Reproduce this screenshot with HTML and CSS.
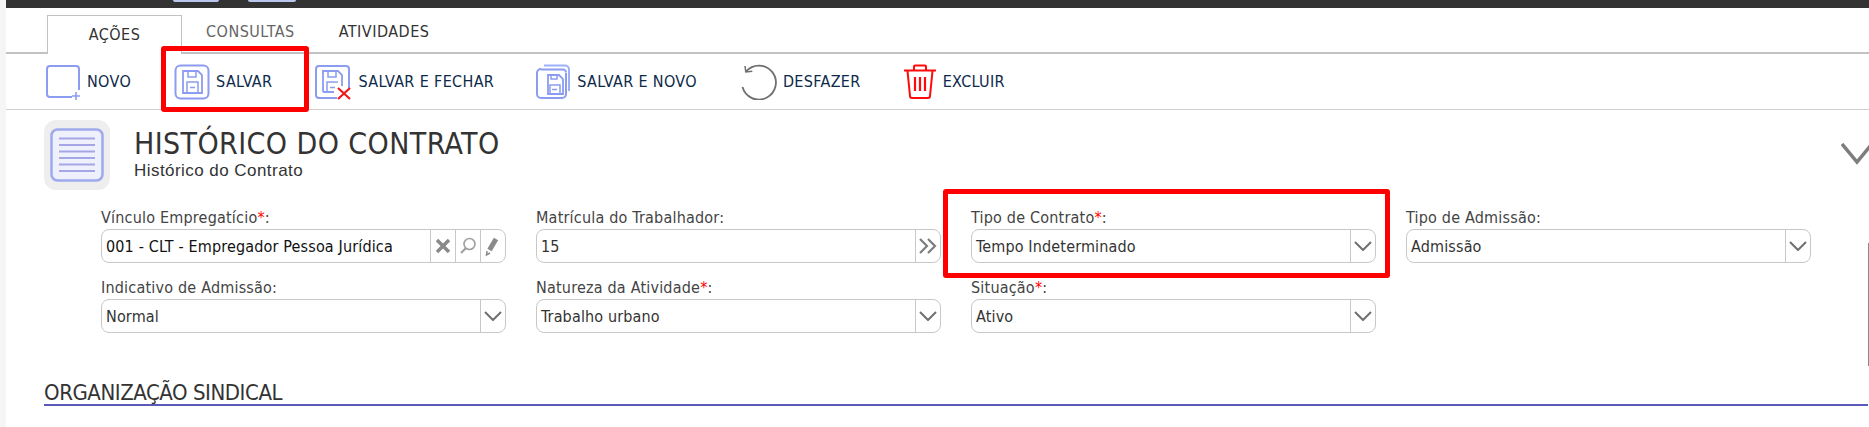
FILE: index.html
```html
<!DOCTYPE html>
<html lang="pt-BR">
<head>
  <meta charset="UTF-8" />
  <title>Histórico do Contrato</title>
  <link rel="stylesheet" href="styles.css">
</head>
<body>

<!-- barra escura do topo -->
<div class="topbar">
  <span class="topbar-btn topbar-btn-a"></span>
  <span class="topbar-btn topbar-btn-b"></span>
</div>

<div class="page">

  <!-- abas -->
  <div class="tabs">
    <div class="tab tab-active">AÇÕES</div>
    <div class="tab tab-muted">CONSULTAS</div>
    <div class="tab">ATIVIDADES</div>
  </div>

  <!-- barra de ações -->
  <div class="toolbar">
    <a class="tool tool-novo">
      <svg class="tool-icon" width="36" height="36" viewBox="0 0 36 36" fill="none" stroke="#8c9cf0" stroke-width="2">
        <path d="M27 33H5a3 3 0 0 1-3-3V5a3 3 0 0 1 3-3h26a3 3 0 0 1 3 3v21"/>
        <path d="M31 28v8M27 32h8" stroke-width="1.6"/>
      </svg>
      NOVO
    </a>
    <a class="tool tool-salvar">
      <svg class="tool-icon" width="36" height="36" viewBox="0 0 36 36" fill="none" stroke="#8c9cf0" stroke-width="2">
        <rect x="1.500" y="1.500" width="33" height="33" rx="5"/>
        <path d="M9 7h15l4 4v18H9z" stroke-width="1.800"/>
        <path d="M14 7v6h8V7M13 29V18h11v11M16 23.500h5" stroke-width="1.500"/>
      </svg>
      SALVAR
    </a>
    <a class="tool tool-fechar">
      <svg class="tool-icon" width="38" height="36" viewBox="0 0 38 36" fill="none" stroke="#8c9cf0" stroke-width="2">
        <path d="M23 34H5a3 3 0 0 1-3-3V5a3 3 0 0 1 3-3h27a3 3 0 0 1 3 3v19"/>
        <path d="M9 28V7h15l4 4v11M9 28h11" stroke-width="1.800"/>
        <path d="M14 7v6h8V7M13 28V18h11M16 23.500h5" stroke-width="1.500"/>
        <path d="M24 24l12 11M36 24L24 35" stroke="#f01818" stroke-width="2.200"/>
      </svg>
      SALVAR E FECHAR
    </a>
    <a class="tool tool-novo2">
      <svg class="tool-icon" width="36" height="36" viewBox="0 0 36 36" fill="none" stroke="#8c9cf0" stroke-width="2">
        <path d="M9 1.500h21a4 4 0 0 1 4 4V27" stroke="#9bb0f8"/>
        <path d="M6 5.500h22a3 3 0 0 1 3 3"/>
        <path d="M31 9v21a4 4 0 0 1-4 4H6a4 4 0 0 1-4-4V9a4 4 0 0 1 4-4"/>
        <path d="M13 11h11l4 4v15H13z" stroke-width="1.800"/>
        <path d="M16 11v4h6v-4M15 30v-9h10v9M17 25.500h5" stroke-width="1.500"/>
      </svg>
      SALVAR E NOVO
    </a>
    <a class="tool tool-desfazer">
      <svg class="tool-icon" width="37" height="36" viewBox="0 0 37 36" fill="none" stroke="#6f6f6f" stroke-width="1.800">
        <path d="M6 7.500A17 17 0 1 1 2.500 23"/>
        <path d="M5 2l.8 6 6.500-.8" stroke-width="1.500"/>
      </svg>
      DESFAZER
    </a>
    <a class="tool tool-excluir">
      <svg class="tool-icon" width="34" height="36" viewBox="0 0 34 36" fill="none" stroke="#ff0a0a" stroke-width="2">
        <path d="M1 6.500h32M11 6V2.500a1 1 0 0 1 1-1h10a1 1 0 0 1 1 1V6"/>
        <path d="M4.500 7l2.500 25a2 2 0 0 0 2 2h16a2 2 0 0 0 2-2l2.500-25"/>
        <path d="M12 13v14M17 13v14M22 13v14" stroke-width="2.200"/>
      </svg>
      EXCLUIR
    </a>
  </div>

  <!-- cabeçalho do formulário -->
  <div class="head">
    <div class="head-icon">
      <svg width="54" height="54" viewBox="0 0 54 54" fill="none">
        <rect x="1.500" y="1.500" width="51" height="51" rx="6" fill="#eef0fb" stroke="#9fa9ee" stroke-width="2.500"/>
        <path d="M9 10.500h36M9 17h36M9 23.500h36M9 30h36M9 36.500h36M9 43h36" stroke="#a5a6e6" stroke-width="2"/>
      </svg>
    </div>
    <div class="head-text">
      <h1>HISTÓRICO DO CONTRATO</h1>
      <p>Histórico do Contrato</p>
    </div>
    <svg class="head-chevron" width="32" height="22" viewBox="0 0 32 22" fill="none" stroke="#7d7d7d" stroke-width="3.500">
      <path d="M1 1l15 18L31 1"/>
    </svg>
  </div>

  <!-- campos -->
  <div class="form">
    <div class="field">
      <label>Vínculo Empregatício<em>*</em>:</label>
      <div class="input">
        <span class="value value-dark">001 - CLT - Empregador Pessoa Jurídica</span>
        <span class="btn">
          <svg width="16" height="16" viewBox="0 0 16 16" fill="none" stroke="#8a8a8a" stroke-width="3.500"><path d="M2 2l12 12M14 2L2 14"/></svg>
        </span>
        <span class="btn">
          <svg width="18" height="18" viewBox="0 0 18 18" fill="none" stroke="#a0a0a0" stroke-width="1.600"><circle cx="10.500" cy="7" r="5.500"/><path d="M7 11l-5 5" stroke-width="2.200"/></svg>
        </span>
        <span class="btn">
          <svg width="16" height="20" viewBox="0 0 16 20" fill="none" stroke="#8a8a8a" stroke-width="5"><path d="M4.500 14L11 3"/><path d="M2 15l-.5 4 3.500-2" stroke-width="1.500"/></svg>
        </span>
      </div>
    </div>
    <div class="field">
      <label>Matrícula do Trabalhador:</label>
      <div class="input">
        <span class="value">15</span>
        <span class="btn">
          <svg width="20" height="16" viewBox="0 0 20 16" fill="none" stroke="#7d7d7d" stroke-width="2.200"><path d="M2 1l7 7-7 7M10 1l7 7-7 7"/></svg>
        </span>
      </div>
    </div>
    <div class="field">
      <label>Tipo de Contrato<em>*</em>:</label>
      <div class="input">
        <span class="value">Tempo Indeterminado</span>
        <span class="btn"><svg width="18" height="10" viewBox="0 0 18 10" fill="none" stroke="#6f6f6f" stroke-width="2"><path d="M1 1l8 8 8-8"/></svg></span>
      </div>
    </div>
    <div class="field">
      <label>Tipo de Admissão:</label>
      <div class="input">
        <span class="value">Admissão</span>
        <span class="btn"><svg width="18" height="10" viewBox="0 0 18 10" fill="none" stroke="#6f6f6f" stroke-width="2"><path d="M1 1l8 8 8-8"/></svg></span>
      </div>
    </div>
    <div class="field">
      <label>Indicativo de Admissão:</label>
      <div class="input">
        <span class="value">Normal</span>
        <span class="btn"><svg width="18" height="10" viewBox="0 0 18 10" fill="none" stroke="#6f6f6f" stroke-width="2"><path d="M1 1l8 8 8-8"/></svg></span>
      </div>
    </div>
    <div class="field">
      <label>Natureza da Atividade<em>*</em>:</label>
      <div class="input">
        <span class="value">Trabalho urbano</span>
        <span class="btn"><svg width="18" height="10" viewBox="0 0 18 10" fill="none" stroke="#6f6f6f" stroke-width="2"><path d="M1 1l8 8 8-8"/></svg></span>
      </div>
    </div>
    <div class="field">
      <label>Situação<em>*</em>:</label>
      <div class="input">
        <span class="value">Ativo</span>
        <span class="btn"><svg width="18" height="10" viewBox="0 0 18 10" fill="none" stroke="#6f6f6f" stroke-width="2"><path d="M1 1l8 8 8-8"/></svg></span>
      </div>
    </div>
  </div>

  <h2 class="section">ORGANIZAÇÃO SINDICAL</h2>

  <!-- por cima da tela: marcações vermelhas e trilho da direita -->
  <div class="mark mark-salvar"></div>
  <div class="mark mark-tipo"></div>
  <div class="edge-line"></div>
</div>

</body>
</html>
```

FILE: styles.css
```css
* {
  box-sizing: border-box;
}

body {
  margin: 0;
  height: 427px;
  overflow: hidden;
  background: #f5f5f5;
  font-family: "DejaVu Sans", sans-serif;
  font-stretch: condensed;
  color: #333;
}

.topbar {
  height: 8px;
  background: #333;
  margin-left: 6px;
  position: relative;
}

.topbar-btn {
  position: absolute;
  top: 0;
  height: 2px;
  background: #b9c7ee;
  border-radius: 0 0 6px 6px;
}

.topbar-btn-a {
  left: 167px;
  width: 46px;
}

.topbar-btn-b {
  left: 242px;
  width: 48px;
}

.page {
  margin-left: 6px;
  height: 419px;
  background: #fff;
  position: relative;
}

.tabs {
  height: 46px;
  padding: 7px 0 0 41px;
  display: flex;
  border-bottom: 2px solid #c2c2c2;
}

.tab {
  padding: 0 22px;
  height: 39px;
  line-height: 34px;
  font-size: 16px;
  letter-spacing: 0.5px;
  color: #333;
}

.tab-active {
  width: 135px;
  padding: 0;
  text-align: center;
  background: #fff;
  border: 1px solid #c2c2c2;
  border-bottom: none;
  line-height: 37px;
}

.tab-muted {
  color: #666;
  margin-left: 2px;
}

.toolbar {
  height: 56px;
  border-bottom: 1px solid #d0d0d0;
  padding-left: 39px;
  display: flex;
  align-items: center;
}

.tool {
  display: flex;
  align-items: center;
  gap: 6px;
  font-size: 16px;
  letter-spacing: 0.35px;
  color: #0d2a4a;
}

.tool-icon {
  flex: none;
}

.tool-salvar {
  margin-left: 43px;
}

.tool-fechar {
  margin-left: 42px;
}

.tool-novo2 {
  margin-left: 41px;
}

.tool-desfazer {
  margin-left: 43px;
}

.tool-excluir {
  margin-left: 42px;
}

.head {
  display: flex;
  height: 95px;
  padding: 10px 0 0 38px;
}

.head-icon {
  width: 66px;
  height: 70px;
  background: #eee;
  border-radius: 12px;
  display: flex;
  align-items: center;
  justify-content: center;
}

.head-text {
  margin-left: 24px;
  padding-top: 7px;
}

.head-text h1 {
  margin: 0;
  font-size: 30px;
  font-weight: normal;
  line-height: 34px;
  letter-spacing: 0.4px;
  color: #333;
}

.head-text p {
  margin: 0;
  font-family: "Liberation Sans", sans-serif;
  font-stretch: normal;
  font-size: 17px;
  line-height: 19px;
  letter-spacing: 0.45px;
  color: #333;
}

.head-chevron {
  margin: 23px 0 0 auto;
  transform: translateX(4px);
}

.form {
  padding-left: 95px;
  display: grid;
  grid-template-columns: repeat(4, 405px);
  column-gap: 30px;
  row-gap: 0;
}

.field {
  height: 70px;
}

.field label {
  display: block;
  height: 24px;
  line-height: 25px;
  font-size: 16px;
  letter-spacing: 0.2px;
  color: #444;
}

.field em {
  color: #f00;
  font-style: normal;
}

.input {
  height: 34px;
  border: 1px solid #c8c8c8;
  border-radius: 8px;
  display: flex;
  align-items: center;
  font-size: 16px;
  letter-spacing: 0.15px;
  color: #333;
}

.value {
  flex: 1;
  padding-left: 4px;
  white-space: nowrap;
}

.value-dark {
  color: #111;
}

.btn {
  width: 25px;
  height: 100%;
  border-left: 1px solid #c8c8c8;
  display: flex;
  align-items: center;
  justify-content: center;
}

.section {
  margin: 34px 1px 0 38px;
  height: 27px;
  font-size: 22px;
  font-weight: normal;
  line-height: 27px;
  letter-spacing: -0.45px;
  color: #333;
  border-bottom: 2px solid #5a5ab8;
}

.mark {
  position: absolute;
  border: 5px solid #f00;
  border-radius: 3px;
}

.mark-salvar {
  left: 155px;
  top: 38px;
  width: 148px;
  height: 66px;
}

.mark-tipo {
  left: 937px;
  top: 181px;
  width: 447px;
  height: 89px;
}

.edge-line {
  position: absolute;
  right: 0;
  top: 235px;
  width: 1px;
  height: 123px;
  background: #888;
}
```
